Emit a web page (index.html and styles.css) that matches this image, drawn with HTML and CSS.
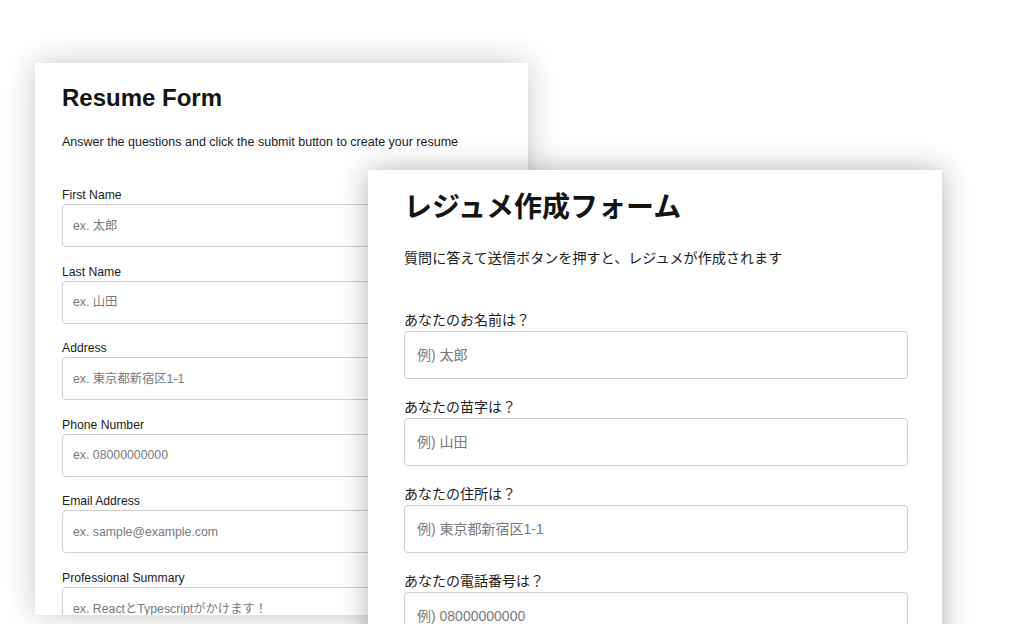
FILE: index.html
```html
<!DOCTYPE html>
<html lang="ja">
<head>
<meta charset="utf-8">
<title>Resume Form</title>
<link rel="stylesheet" href="styles.css">
</head>
<body>
<div class="stage">
  <section class="card card-en">
    <h1 class="title">Resume Form</h1>
    <p class="lead">Answer the questions and click the submit button to create your resume</p>
    <form class="fields">
      <label class="field"><span class="label">First Name</span><input class="input" type="text" placeholder="ex. 太郎"></label>
      <label class="field"><span class="label">Last Name</span><input class="input" type="text" placeholder="ex. 山田"></label>
      <label class="field"><span class="label">Address</span><input class="input" type="text" placeholder="ex. 東京都新宿区1-1"></label>
      <label class="field"><span class="label">Phone Number</span><input class="input" type="text" placeholder="ex. 08000000000"></label>
      <label class="field"><span class="label">Email Address</span><input class="input" type="text" placeholder="ex. sample@example.com"></label>
      <label class="field"><span class="label">Professional Summary</span><textarea class="input area" placeholder="ex. ReactとTypescriptがかけます！"></textarea></label>
    </form>
  </section>

  <section class="card card-ja">
    <h1 class="title">レジュメ作成フォーム</h1>
    <p class="lead">質問に答えて送信ボタンを押すと、レジュメが作成されます</p>
    <form class="fields">
      <label class="field"><span class="label">あなたのお名前は？</span><input class="input" type="text" placeholder="例) 太郎"></label>
      <label class="field"><span class="label">あなたの苗字は？</span><input class="input" type="text" placeholder="例) 山田"></label>
      <label class="field"><span class="label">あなたの住所は？</span><input class="input" type="text" placeholder="例) 東京都新宿区1-1"></label>
      <label class="field"><span class="label">あなたの電話番号は？</span><input class="input" type="text" placeholder="例) 08000000000"></label>
    </form>
  </section>
</div>
</body>
</html>
```

FILE: styles.css
```css
* { box-sizing: border-box; }

html, body {
  margin: 0;
  padding: 0;
  background: #ffffff;
}

body {
  font-family: "Liberation Sans", "Noto Sans CJK JP", sans-serif;
  color: #1c1c1c;
}

.stage {
  position: relative;
  width: 1016px;
  height: 624px;
  overflow: hidden;
  padding-top: 63px;
  padding-left: 35px;
}

.card {
  background: #ffffff;
  overflow: hidden;
}

.title {
  margin: 0;
  font-weight: bold;
  color: #141414;
}

.lead {
  margin: 0;
}

.fields {
  display: flex;
  flex-direction: column;
  margin: 0;
}

.field {
  display: flex;
  flex-direction: column;
}

.label {
  display: block;
}

.input {
  display: block;
  width: 100%;
  margin: 0;
  border: 1px solid #cfcfcf;
  border-radius: 4px;
  background: #ffffff;
  font-family: "Liberation Sans", "Noto Sans CJK JP", sans-serif;
  color: #1c1c1c;
  outline: none;
}

.input::placeholder {
  color: #7a7a7a;
  opacity: 1;
}

/* English card */
.card-en {
  width: 493px;
  height: 552px;
  padding: 21px 27px 0;
  box-shadow: 0 0 30px rgba(0, 0, 0, 0.22);
}

.card-en .title {
  font-size: 24px;
  line-height: 28px;
}

.card-en .lead {
  margin-top: 22px;
  font-size: 12.5px;
  line-height: 16px;
}

.card-en .fields {
  margin-top: 37px;
  gap: 16.5px;
}

.card-en .field {
  gap: 1px;
}

.card-en .label {
  font-size: 12.2px;
  line-height: 16px;
}

.card-en .input {
  height: 43px;
  padding: 0 10px;
  font-size: 12.3px;
}

.card-en .area {
  height: 80px;
  padding: 13px 10px;
  line-height: 16px;
  resize: none;
}

/* Japanese card */
.card-ja {
  position: absolute;
  left: 368px;
  top: 170px;
  width: 574px;
  height: 520px;
  padding: 20px 34px 0 36px;
  box-shadow: 0 0 28px rgba(0, 0, 0, 0.3);
}

.card-ja .title {
  font-size: 28px;
  line-height: 36px;
}

.card-ja .lead {
  margin-top: 22px;
  font-size: 14.1px;
  line-height: 20px;
}

.card-ja .fields {
  margin-top: 42px;
  gap: 18px;
}

.card-ja .field {
  gap: 1px;
}

.card-ja .label {
  font-size: 14px;
  line-height: 20px;
}

.card-ja .input {
  height: 48px;
  padding: 0 12px;
  font-size: 14px;
}
```
